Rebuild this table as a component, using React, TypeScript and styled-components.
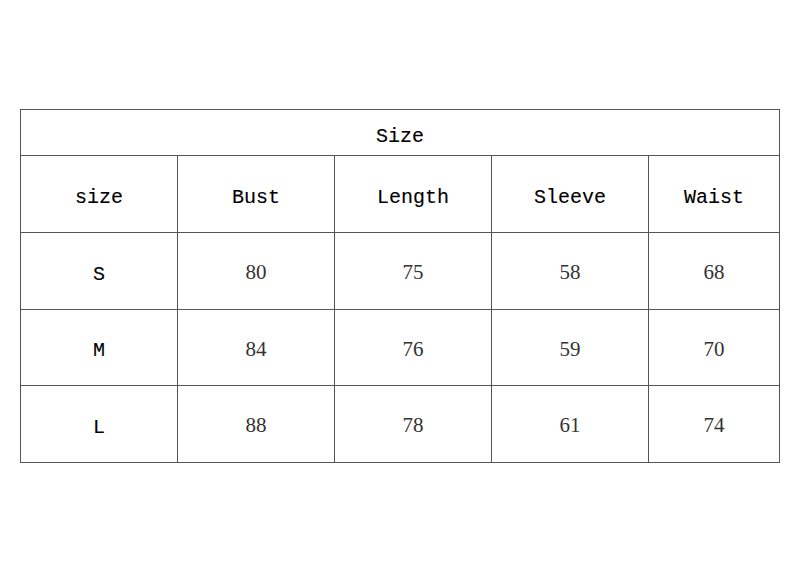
import React from "react";
import styled, { createGlobalStyle } from "styled-components";

const Global = createGlobalStyle`
  html, body { margin: 0; padding: 0; background: #ffffff; }
  body { width: 800px; height: 572px; overflow: hidden; }
`;

const Page = styled.div`
  padding: 109px 0 0 20px;
`;

const Grid = styled.div`
  display: grid;
  grid-template-columns: 156px 156px 156px 156px 130px;
  grid-template-rows: 45px 76px 76px 75px 76px;
  gap: 1px;
  width: 758px;
  border: 1px solid #555555;
  background: #555555;
  color: #111111;
`;

const Cell = styled.div<{ $num?: boolean }>`
  display: flex;
  align-items: center;
  justify-content: center;
  background: #ffffff;
  padding-top: ${(p) => (p.$num ? "3px" : "7px")};
  font-family: ${(p) =>
    p.$num
      ? `"Liberation Serif", "Times New Roman", serif`
      : `"Liberation Mono", "Courier New", monospace`};
  font-size: ${(p) => (p.$num ? "21px" : "20px")};
  color: ${(p) => (p.$num ? "#333333" : "#000000")};
  -webkit-text-stroke: ${(p) => (p.$num ? "0" : "0.12px #000000")};
  line-height: 1;
`;

const TitleCell = styled(Cell)`
  grid-column: 1 / -1;
  padding-top: 8px;
`;

const heads = ["size", "Bust", "Length", "Sleeve", "Waist"];
const rows: string[][] = [
  ["S", "80", "75", "58", "68"],
  ["M", "84", "76", "59", "70"],
  ["L", "88", "78", "61", "74"],
];

export default function App() {
  return (
    <>
      <Global />
      <Page>
        <Grid>
          <TitleCell>Size</TitleCell>
          {heads.map((h) => (
            <Cell key={h}>{h}</Cell>
          ))}
          {rows.map((r) =>
            r.map((c, j) => (
              <Cell key={r[0] + j} $num={j > 0}>
                {c}
              </Cell>
            ))
          )}
        </Grid>
      </Page>
    </>
  );
}
